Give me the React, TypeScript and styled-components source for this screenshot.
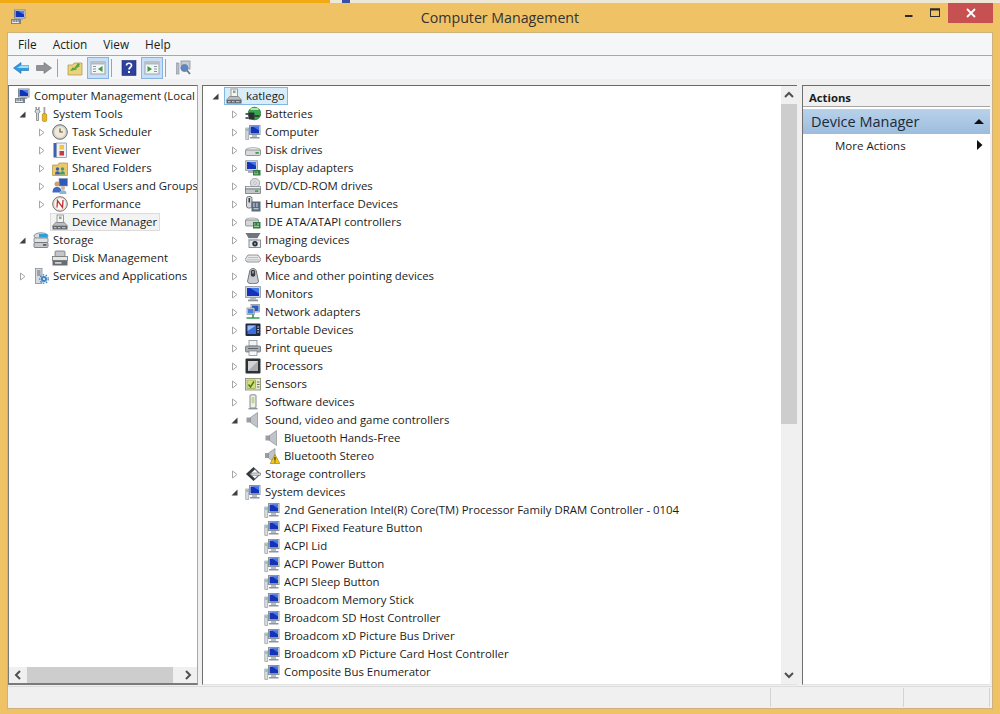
import React from "react";
import styled, { createGlobalStyle } from "styled-components";

const Global = createGlobalStyle`
  html, body { margin: 0; padding: 0; background: #efc265; }
  * { box-sizing: border-box; }
  #root { width: 1000px; height: 714px; overflow: hidden; }
`;

const FONT = `"Open Sans", "Noto Sans", "Liberation Sans", sans-serif`;

const Screen = styled.div`
  width: 1000px;
  height: 714px;
  display: flex;
  flex-direction: column;
  background: #efc265;
  font-family: ${FONT};
  font-size: 11.4px;
  color: #1c1c1c;
  overflow: hidden;
`;
const DesktopStrip = styled.div`
  height: 3px;
  flex: none;
  display: flex;
  background: #efe8d6;
`;
const StripAccent = styled.div`
  width: 330px;
  background: #f2aa14;
`;
const StripMark = styled.div`
  width: 8px;
  margin-left: 12px;
  background: #3a4fa8;
`;
const TitleBar = styled.div`
  height: 30px;
  flex: none;
  display: flex;
  align-items: flex-start;
  position: relative;
`;
const TitleIcon = styled.div`
  margin: 6px 0 0 10px;
  display: flex;
`;
const TitleText = styled.div`
  position: absolute;
  left: 0;
  right: 0;
  top: 5px;
  text-align: center;
  font-size: 14.2px;
  line-height: 20px;
  color: #333;
`;
const WindowButtons = styled.div`
  margin-left: auto;
  margin-right: 7px;
  display: flex;
`;
const CaptionButton = styled.div<{ $close?: boolean; $w: number }>`
  width: ${(p) => p.$w}px;
  height: 20px;
  display: flex;
  align-items: center;
  justify-content: center;
  background: ${(p) => (p.$close ? "#c75050" : "transparent")};
`;
const Client = styled.div`
  margin: 0 8px;
  height: 675px;
  flex: none;
  display: flex;
  flex-direction: column;
  background: #f0f0f0;
  box-shadow: 0 0 0 1px #cdb27c;
`;
const MenuBar = styled.div`
  height: 23px;
  flex: none;
  display: flex;
  align-items: center;
  gap: 16px;
  padding-left: 10px;
  background: #f5f6f7;
  border-bottom: 1px solid #a9a9a9;
`;
const MenuItem = styled.span`
  font-size: 11.8px;
  color: #1c1c1c;
`;
const Toolbar = styled.div`
  height: 23px;
  flex: none;
  display: flex;
  align-items: flex-end;
  gap: 1px;
  padding-left: 2px;
  background: #f5f6f7;
`;
const ToolButton = styled.div<{ $on?: boolean }>`
  width: 22px;
  height: 22px;
  display: flex;
  align-items: center;
  justify-content: center;
  background: ${(p) => (p.$on ? "#c6def6" : "transparent")};
  border: 1px solid ${(p) => (p.$on ? "#8ab2de" : "transparent")};
`;
const ToolSeparator = styled.div`
  width: 1px;
  height: 18px;
  margin: 0 5px 2px 1px;
  background: #9fa3a8;
`;
const Panes = styled.div`
  flex: none;
  height: 600px;
  margin-top: 6px;
  display: flex;
`;
const TreePane = styled.div`
  width: 190px;
  flex: none;
  display: flex;
  flex-direction: column;
  background: #fff;
  border: 1px solid #7a7a7a;
  border-top-color: #6a6a6a;
  border-bottom-width: 2px;
  border-right-color: #a8a8a8;
`;
const DevicePane = styled.div`
  width: 595px;
  flex: none;
  margin-left: 4px;
  display: flex;
  background: #fff;
  border-left: 1px solid #6f6f6f;
  border-top: 1px solid #6a6a6a;
  border-bottom: 1px solid #e2e2e2;
`;
const ActionPane = styled.div`
  width: 188px;
  flex: none;
  margin-left: 5px;
  display: flex;
  flex-direction: column;
  background: #fff;
  border-left: 1px solid #6f6f6f;
  border-top: 1px solid #6a6a6a;
  border-bottom: 1px solid #e2e2e2;
`;
const TreeBody = styled.div`
  flex: 1;
  min-width: 0;
  min-height: 0;
  overflow: hidden;
  padding-top: 1px;
`;
const Row = styled.div<{ $left: number }>`
  height: 18px;
  display: flex;
  align-items: center;
  white-space: nowrap;
  padding-left: ${(p) => p.$left}px;
`;
const Expander = styled.div`
  width: 14px;
  flex: none;
  height: 18px;
  display: flex;
  align-items: center;
  justify-content: center;
`;
const Entry = styled.div<{ $mark?: "focus" | "dim" }>`
  height: 18px;
  margin-left: 2px;
  padding-left: 1px;
  padding-right: 2px;
  display: flex;
  align-items: center;
  gap: 4px;
  background: ${(p) => (p.$mark === "focus" ? "#d9ecfa" : p.$mark === "dim" ? "#f3f3f3" : "transparent")};
  border: 1px solid ${(p) => (p.$mark === "focus" ? "#7fb8e0" : p.$mark === "dim" ? "#dcdcdc" : "transparent")};
`;
const Label = styled.span`
  font-size: 11.4px;
  line-height: 16px;
  color: #1c1c1c;
`;
const VBar = styled.div`
  width: 16px;
  flex: none;
  display: flex;
  flex-direction: column;
  background: #f0f0f0;
`;
const VArrow = styled.div`
  height: 18px;
  flex: none;
  display: flex;
  align-items: center;
  justify-content: center;
`;
const VThumb = styled.div`
  height: 320px;
  flex: none;
  background: #cdcdcd;
`;
const VTrack = styled.div`
  flex: 1;
`;
const HBar = styled.div`
  height: 16px;
  flex: none;
  display: flex;
  background: #f0f0f0;
`;
const HArrow = styled.div`
  width: 18px;
  flex: none;
  display: flex;
  align-items: center;
  justify-content: center;
`;
const HThumb = styled.div`
  width: 146px;
  flex: none;
  background: #cdcdcd;
`;
const HTrack = styled.div`
  flex: 1;
`;
const ActionsHead = styled.div`
  height: 21px;
  flex: none;
  display: flex;
  align-items: center;
  padding: 2px 0 0 6px;
  font-size: 11.3px;
  font-weight: 700;
  color: #1c1c1c;
  background: #f0f0f0;
  border-bottom: 1px solid #a4a4a4;
`;
const ActionGroup = styled.div`
  height: 25px;
  flex: none;
  margin-top: 2px;
  display: flex;
  align-items: center;
  justify-content: space-between;
  padding: 0 4px 0 8px;
  background: linear-gradient(#b9d2ea, #9dbcdd);
  font-size: 14.5px;
  color: #1a2a3a;
`;
const ActionRow = styled.div`
  height: 18px;
  flex: none;
  margin-top: 2px;
  display: flex;
  align-items: center;
  justify-content: space-between;
  padding: 0 7px 0 32px;
  font-size: 11.5px;
  color: #1c1c1c;
`;
const StatusBar = styled.div`
  height: 22px;
  flex: none;
  margin-top: 1px;
  display: flex;
  background: #f0f0f0;
  border-top: 1px solid #dcdcdc;
`;
const StatusCell = styled.div<{ $w: number }>`
  width: ${(p) => p.$w}px;
  flex: none;
  margin: 1px 0;
  border-right: 1px solid #d4d4d4;
`;

const Svg = styled.svg`
  width: 16px;
  height: 16px;
  flex: none;
  display: block;
`;

const Screen16 = () => (
  <>
    <rect x="4.5" y="1.5" width="10.5" height="9" fill="#e8ebf0" stroke="#8a94a0" />
    <rect x="5.5" y="2.5" width="8.500" height="7" fill="#1533b8" />
    <path d="M8 2.500h6v4z" fill="#3f78e8" />
    <rect x="7" y="11" width="5" height="2" fill="#b5bcc4" />
    <rect x="5" y="13" width="9.500" height="1.500" fill="#8d959e" />
  </>
);

const icons: Record<string, React.ReactNode> = {
  root: (
    <>
      <rect x="4.5" y="1" width="10.500" height="8" fill="#e4e8ee" stroke="#7e8894" />
      <rect x="5.5" y="2" width="8.500" height="6" fill="#1533b8" />
      <path d="M8 2h6v3.500z" fill="#4a86ec" />
      <rect x="7" y="9" width="6" height="2" fill="#a0a8b2" />
      <rect x="1" y="10" width="10" height="5" fill="#7b838c" />
      <path d="M2 12h1.500M4.500 12h1.500M7 12h1.500M2 13.500h7" stroke="#e6e8ea" />
    </>
  ),
  tools: (
    <>
      <path d="M3 1v3l-1 1v1l1.500 1v7.500h2V7l1.500-1v-1l-1-1V1l-.5 2.500h-2z" fill="#d4d6d8" stroke="#6c7278" strokeWidth=".7" />
      <rect x="10.500" y="1" width="1.800" height="7" fill="#a0a4a8" />
      <rect x="9.300" y="7.500" width="4.400" height="8" rx="1.500" fill="#eab71c" stroke="#a87c08" strokeWidth=".6" />
    </>
  ),
  clock: (
    <>
      <circle cx="8" cy="8" r="7.300" fill="#d2d4d4" stroke="#6d6d6d" />
      <circle cx="8" cy="8" r="5.200" fill="#f2ead6" />
      <path d="M8 4.500V8h3" stroke="#6a5a30" strokeWidth="1.200" fill="none" />
    </>
  ),
  event: (
    <>
      <rect x="1.500" y="1" width="3" height="14.500" fill="#3d62b0" />
      <rect x="4.500" y="1" width="10" height="14.500" fill="#eef0f4" stroke="#7d8aa0" strokeWidth=".7" />
      <rect x="7.500" y="3" width="4.500" height="4.500" fill="#f2c83a" />
      <rect x="7.500" y="9" width="4.500" height="4.500" fill="#c7384a" />
    </>
  ),
  shared: (
    <>
      <path d="M.5 5h5.500l1-2h8.500v12.500H.5z" fill="#e9c96c" stroke="#b0903c" strokeWidth=".7" />
      <circle cx="5.500" cy="9" r="1.700" fill="#3a5fae" />
      <path d="M3 14.500c0-2 1-3.200 2.500-3.200s2.500 1.200 2.500 3.200z" fill="#3a5fae" />
      <circle cx="10.500" cy="9" r="1.700" fill="#3f9a7a" />
      <path d="M8 14.500c0-2 1-3.200 2.500-3.200s2.500 1.200 2.500 3.200z" fill="#3f9a7a" />
    </>
  ),
  users: (
    <>
      <rect x="7" y=".5" width="8.500" height="7.500" fill="#3159b8" stroke="#8496b8" strokeWidth=".6" />
      <circle cx="5" cy="6" r="2.500" fill="#c9a074" />
      <path d="M.5 14.500c0-3.800 1.800-5.500 4.500-5.500s4.500 1.700 4.500 5.500z" fill="#3f6ac2" />
      <circle cx="11" cy="10" r="2.100" fill="#d8b48c" />
      <path d="M7.500 16c0-2.800 1.400-3.800 3.500-3.800s3.500 1 3.500 3.800z" fill="#8ab5d4" />
    </>
  ),
  perf: (
    <>
      <circle cx="8" cy="8" r="7.300" fill="#e6e4dc" stroke="#77706a" />
      <circle cx="8" cy="8" r="5.300" fill="#fbfaf6" />
      <path d="M5 11.500L5.500 4.500 10.500 11.500 11 4" fill="none" stroke="#bf2f35" strokeWidth="1.300" />
    </>
  ),
  devmgr: (
    <>
      <rect x="5" y="1" width="6.500" height="7.500" fill="#f3f3f0" stroke="#888" strokeWidth=".8" />
      <rect x="7" y="2.500" width="2.500" height="2.500" fill="#8fa48a" />
      <path d="M3.500 8.500h9L15.500 12H.5z" fill="#b9bcc0" stroke="#6e7378" strokeWidth=".6" />
      <rect x=".5" y="12" width="15" height="3.500" fill="#62676c" />
      <path d="M2 13.700h2.500M6 13.700h2.500M10 13.700h3.500" stroke="#d4d6d8" />
    </>
  ),
  storage: (
    <>
      <ellipse cx="8" cy="4" rx="7" ry="3.200" fill="#d9dcdf" stroke="#777d83" strokeWidth=".8" />
      <rect x="6" y="2" width="8.500" height="3.500" fill="#2ea0d8" />
      <rect x="1" y="6" width="14" height="4.500" rx="1" fill="#e0e2e4" stroke="#777d83" strokeWidth=".8" />
      <rect x="1" y="10.500" width="14" height="5" rx="1" fill="#c6c9cc" stroke="#666c72" strokeWidth=".8" />
      <rect x="10" y="12" width="3.500" height="1.800" fill="#5a6066" />
    </>
  ),
  diskmgmt: (
    <>
      <rect x="3" y="1" width="10" height="5.500" rx="1" fill="#c4c7ca" stroke="#6f7478" strokeWidth=".8" />
      <rect x=".5" y="6.500" width="15" height="4" fill="#e6e6e2" stroke="#6f7478" strokeWidth=".8" />
      <rect x=".5" y="10.500" width="15" height="5" fill="#686d72" />
      <rect x="3" y="12" width="6.500" height="1.800" fill="#ccd0d2" />
    </>
  ),
  services: (
    <>
      <rect x="2.500" y=".5" width="6.500" height="15" fill="#d6dade" stroke="#7a8088" strokeWidth=".7" />
      <path d="M4 3h3.500M4 5h3.500M4 7h3.500" stroke="#60666e" />
      <circle cx="11" cy="11" r="3" fill="#3f85bf" />
      <circle cx="11" cy="11" r="4.200" fill="none" stroke="#3f85bf" strokeWidth="1.300" strokeDasharray="1.500 1.500" />
      <circle cx="11" cy="11" r="1.100" fill="#e8f0f6" />
    </>
  ),
  battery: (
    <>
      <circle cx="9.500" cy="7.500" r="6.300" fill="#3aa64a" stroke="#1c6a2a" strokeWidth=".7" />
      <path d="M5.500 3h8" stroke="#d5f2d6" strokeWidth="1.600" />
      <rect x="3.500" y="6.500" width="6" height="7" rx="1" fill="#2c3034" />
      <path d="M.5 8h3M.5 12h3M9.500 10h5" stroke="#2c3034" strokeWidth="1.400" />
    </>
  ),
  computer: (
    <>
      <Screen16 />
      <rect x=".8" y="4" width="3" height="11.500" fill="#d2d6da" stroke="#88909a" strokeWidth=".6" />
      <path d="M1.300 6h2" stroke="#38a6c8" />
    </>
  ),
  disk: (
    <>
      <ellipse cx="8" cy="8" rx="7.500" ry="2.300" fill="#f0f1f2" stroke="#8a8f94" strokeWidth=".7" />
      <rect x=".5" y="8" width="15" height="5.500" rx="1" fill="#d8dadc" stroke="#6d7378" strokeWidth=".7" />
      <rect x="10.500" y="10" width="3.300" height="1.800" fill="#3f9f4a" />
    </>
  ),
  display: (
    <>
      <rect x=".8" y=".8" width="11.500" height="9.500" fill="#e2e6ea" stroke="#8a94a0" />
      <rect x="2" y="2" width="9" height="7" fill="#1533b8" />
      <path d="M4 2h7v4z" fill="#3f78e8" />
      <rect x="3" y="11" width="6" height="2" fill="#a9b0b7" />
      <rect x="8" y="10" width="7.500" height="5.500" fill="#2f7a3e" />
      <path d="M9 12h1.500M11.500 12h1.500M9 13.800h4.500" stroke="#b8e4bc" strokeWidth=".8" />
    </>
  ),
  dvd: (
    <>
      <circle cx="10" cy="5" r="4.700" fill="#d9dcdf" stroke="#8a8f94" strokeWidth=".7" />
      <circle cx="10" cy="5" r="1.300" fill="#fff" stroke="#8a8f94" strokeWidth=".5" />
      <rect x=".5" y="8.500" width="15" height="2.500" fill="#eceded" stroke="#767c82" strokeWidth=".7" />
      <rect x=".5" y="11" width="15" height="4.500" fill="#c2c5c8" stroke="#666c72" strokeWidth=".7" />
      <rect x="10" y="12.300" width="3.300" height="1.600" fill="#3f9f4a" />
    </>
  ),
  hid: (
    <>
      <rect x="1.500" y=".5" width="5.500" height="11.500" rx="2" fill="#d7d9dc" stroke="#555b62" strokeWidth=".8" />
      <rect x="3.500" y="2" width="1.600" height="4.500" fill="#3a4046" />
      <rect x="6.500" y="5.500" width="9" height="10" fill="#59697e" />
      <path d="M8 8h1.800M11 8h1.800M8 10h1.800M11 10h1.800M8.500 12.800h5" stroke="#e4e8ee" />
    </>
  ),
  ide: (
    <>
      <ellipse cx="7" cy="6" rx="6.500" ry="2" fill="#eeeff0" stroke="#8a8f94" strokeWidth=".7" />
      <rect x=".5" y="6" width="13" height="6" rx="1" fill="#d4d6d8" stroke="#6d7378" strokeWidth=".7" />
      <rect x="8" y="8" width="7.500" height="6.500" fill="#2f7a3e" />
      <path d="M9 10h1.500M12 10h2M9 12.300h5" stroke="#b8e4bc" />
    </>
  ),
  imaging: (
    <>
      <path d="M.5 1h15L12.500 6h-9z" fill="#6d7680" />
      <rect x="3" y="6" width="10" height="2" fill="#dfe3e6" />
      <rect x="4" y="8" width="11.500" height="7.500" fill="#e6e8ea" stroke="#70767c" strokeWidth=".8" />
      <circle cx="10" cy="11.700" r="2.700" fill="#2b3138" />
      <circle cx="10" cy="11.700" r="1" fill="#7fb0d8" />
    </>
  ),
  keyboard: (
    <>
      <path d="M3 5h10l3 4.500-2 2.500H2L0 9.500z" fill="#e8e8e8" stroke="#7a7e82" strokeWidth=".8" />
      <path d="M3.500 7.500h9M2.500 9.800h11" stroke="#8f9296" strokeDasharray="1 1" />
    </>
  ),
  mouse: (
    <>
      <path d="M4.500 4c0-2 1.500-3.500 3.500-3.500S11.500 2 11.500 4l2 9.500c0 1.500-2.500 2.300-5.500 2.300s-5.500-.8-5.500-2.300z" fill="#c9cdd1" stroke="#50565c" strokeWidth=".8" />
      <path d="M5.800 3.500c0-1 1.100-1.700 2.200-1.700s2.200.7 2.200 1.700v3.500c0 1-1.100 1.700-2.200 1.700S5.800 8 5.800 7z" fill="#34393f" />
      <rect x="7.400" y="3" width="1.200" height="2.500" fill="#c9cdd1" />
    </>
  ),
  monitor: (
    <>
      <rect x=".7" y=".7" width="14.600" height="10.600" fill="#e2e6ea" stroke="#8a94a0" />
      <rect x="2" y="2" width="12" height="8" fill="#1533b8" />
      <path d="M5 2h9v5.500z" fill="#3f78e8" />
      <rect x="5" y="12" width="6" height="1.500" fill="#b5bcc4" />
      <rect x="3" y="13.500" width="10" height="1.800" fill="#8d959e" />
    </>
  ),
  network: (
    <>
      <rect x="6" y=".5" width="8.500" height="7.500" fill="#d8dce2" stroke="#7e8894" strokeWidth=".7" />
      <rect x="7" y="1.500" width="6.500" height="5.500" fill="#2b56c8" />
      <rect x="2" y="4" width="7.500" height="6.500" fill="#d8dce2" stroke="#7e8894" strokeWidth=".7" />
      <rect x="3" y="5" width="5.500" height="4.500" fill="#4a7de0" />
      <path d="M8 10.500v3M1.500 14h13" stroke="#2f9e4c" strokeWidth="1.700" />
    </>
  ),
  portable: (
    <>
      <rect x=".5" y="1.500" width="15" height="12.500" rx="1" fill="#1f2b46" />
      <rect x="2.500" y="3.500" width="8.500" height="8.500" fill="#3d6fdc" />
      <path d="M2.500 3.500H11L2.500 9z" fill="#9abcf2" />
      <path d="M12.300 5h1.800M12.300 7.500h1.800M12.300 10h1.800" stroke="#d5dbe6" />
    </>
  ),
  printer: (
    <>
      <rect x="4" y=".5" width="8" height="5.500" fill="#f2f3f4" stroke="#7a8086" strokeWidth=".7" />
      <rect x=".5" y="6" width="15" height="6" rx="1" fill="#a9aeb4" stroke="#5e646a" strokeWidth=".7" />
      <rect x="3" y="8" width="10" height="1" fill="#5e646a" />
      <rect x="4" y="11" width="8" height="4.500" fill="#f7f7f8" stroke="#7a8086" strokeWidth=".7" />
    </>
  ),
  cpu: (
    <>
      <rect x=".5" y=".5" width="15" height="15" rx="1" fill="#2d3136" />
      <rect x="3" y="3" width="10" height="10" fill="#a9abae" />
      <path d="M3 3h10L3 13z" fill="#d2d3d4" />
      <path d="M.5 5v6M15.500 5v6" stroke="#c7a03a" strokeDasharray="1 1" />
    </>
  ),
  sensor: (
    <>
      <rect x=".5" y="2.500" width="15" height="11.500" fill="#e8e8d0" stroke="#7f8866" strokeWidth=".8" />
      <rect x="2" y="4" width="8.500" height="8.500" fill="#d6de72" stroke="#8c9a44" strokeWidth=".6" />
      <path d="M3.500 8.500l2 2.500 3.500-5.500" fill="none" stroke="#3e7c30" strokeWidth="1.500" />
      <path d="M12 6h2.500M12 8.500h2.500M12 11h2.500" stroke="#6d7460" />
    </>
  ),
  software: (
    <>
      <rect x="5" y=".8" width="6" height="13.200" rx="1" fill="#eef0ea" stroke="#777c80" strokeWidth=".9" />
      <rect x="6.500" y="2.800" width="3" height="6.500" fill="#c6d49a" />
      <rect x="3.500" y="14" width="9" height="1.400" fill="#8e9398" />
    </>
  ),
  speaker: (
    <>
      <rect x="1.500" y="5.500" width="4.500" height="5" fill="#9a9ea2" />
      <path d="M5.500 5.500L12.500.5v15L5.500 10.500z" fill="#c0c3c7" stroke="#7e8287" strokeWidth=".6" />
    </>
  ),
  speakerwarn: (
    <>
      <rect x="1" y="5" width="4.500" height="5" fill="#9a9ea2" />
      <path d="M4.500 5L11 .5v14L4.500 10z" fill="#c0c3c7" stroke="#7e8287" strokeWidth=".6" />
      <path d="M11 6.500L15.800 15.500H6.200z" fill="#f3c81e" stroke="#8f7408" strokeWidth=".6" />
      <path d="M11 9v3.500M11 13.500v1" stroke="#222" strokeWidth="1.100" />
    </>
  ),
  controller: (
    <>
      <path d="M9.500 2L3 8l6.500 6" fill="none" stroke="#34393f" strokeWidth="2.800" />
      <path d="M10 3l5 5-5 5" fill="none" stroke="#6b7076" strokeWidth="1.200" />
      <rect x="6" y="7" width="9.500" height="2.200" fill="#d8dadc" stroke="#555b62" strokeWidth=".5" />
    </>
  ),
  system: (
    <>
      <Screen16 />
      <rect x=".8" y="5" width="3" height="10.500" fill="#d9dde0" stroke="#88909a" strokeWidth=".6" />
      <path d="M1.300 7h2" stroke="#3aa6a0" />
    </>
  ),
};

const Icon = ({ name }: { name: string }) => <Svg viewBox="0 0 16 16">{icons[name]}</Svg>;

const Twist = ({ open }: { open?: boolean }) => (
  <svg width="9" height="9" viewBox="0 0 9 9" style={{ display: "block" }}>
    {open ? (
      <path d="M7.500 1.500V7.500H1.500z" fill="#3f3f3f" />
    ) : (
      <path d="M2.500 1L7 4.500 2.500 8z" fill="#fff" stroke="#a6a6a6" />
    )}
  </svg>
);

type Node = {
  level: number;
  label: string;
  icon: string;
  state?: "open" | "closed" | "none";
  mark?: "focus" | "dim";
};

const TreeRow = ({ node, base, noExpander }: { node: Node; base: number; noExpander?: boolean }) => (
  <Row $left={base + node.level * 19}>
    {!noExpander && (
      <Expander>{node.state && node.state !== "none" ? <Twist open={node.state === "open"} /> : null}</Expander>
    )}
    <Entry $mark={node.mark}>
      <Icon name={node.icon} />
      <Label>{node.label}</Label>
    </Entry>
  </Row>
);

const leftNodes: Node[] = [
  { level: 0, label: "System Tools", icon: "tools", state: "open" },
  { level: 1, label: "Task Scheduler", icon: "clock", state: "closed" },
  { level: 1, label: "Event Viewer", icon: "event", state: "closed" },
  { level: 1, label: "Shared Folders", icon: "shared", state: "closed" },
  { level: 1, label: "Local Users and Groups", icon: "users", state: "closed" },
  { level: 1, label: "Performance", icon: "perf", state: "closed" },
  { level: 1, label: "Device Manager", icon: "devmgr", state: "none", mark: "dim" },
  { level: 0, label: "Storage", icon: "storage", state: "open" },
  { level: 1, label: "Disk Management", icon: "diskmgmt", state: "none" },
  { level: 0, label: "Services and Applications", icon: "services", state: "closed" },
];

const cat = (label: string, icon: string, state: Node["state"] = "closed"): Node => ({ level: 1, label, icon, state });
const dev = (label: string, icon = "system"): Node => ({ level: 2, label, icon, state: "none" });

const deviceNodes: Node[] = [
  { level: 0, label: "katlego", icon: "devmgr", state: "open", mark: "focus" },
  cat("Batteries", "battery"),
  cat("Computer", "computer"),
  cat("Disk drives", "disk"),
  cat("Display adapters", "display"),
  cat("DVD/CD-ROM drives", "dvd"),
  cat("Human Interface Devices", "hid"),
  cat("IDE ATA/ATAPI controllers", "ide"),
  cat("Imaging devices", "imaging"),
  cat("Keyboards", "keyboard"),
  cat("Mice and other pointing devices", "mouse"),
  cat("Monitors", "monitor"),
  cat("Network adapters", "network"),
  cat("Portable Devices", "portable"),
  cat("Print queues", "printer"),
  cat("Processors", "cpu"),
  cat("Sensors", "sensor"),
  cat("Software devices", "software"),
  cat("Sound, video and game controllers", "speaker", "open"),
  dev("Bluetooth Hands-Free", "speaker"),
  dev("Bluetooth Stereo", "speakerwarn"),
  cat("Storage controllers", "controller"),
  cat("System devices", "system", "open"),
  dev("2nd Generation Intel(R) Core(TM) Processor Family DRAM Controller - 0104"),
  dev("ACPI Fixed Feature Button"),
  dev("ACPI Lid"),
  dev("ACPI Power Button"),
  dev("ACPI Sleep Button"),
  dev("Broadcom Memory Stick"),
  dev("Broadcom SD Host Controller"),
  dev("Broadcom xD Picture Bus Driver"),
  dev("Broadcom xD Picture Card Host Controller"),
  dev("Composite Bus Enumerator"),
];

const Chevron = ({ d }: { d: string }) => (
  <svg width="10" height="10" viewBox="0 0 10 10" style={{ display: "block" }}>
    <path d={d} fill="none" stroke="#505050" strokeWidth="2" />
  </svg>
);

const ToolIcon = ({ children }: { children: React.ReactNode }) => <Svg viewBox="0 0 16 16">{children}</Svg>;

export default function App() {
  return (
    <Screen>
      <Global />
      <DesktopStrip>
        <StripAccent />
        <StripMark />
      </DesktopStrip>
      <TitleBar>
        <TitleIcon>
          <Icon name="root" />
        </TitleIcon>
        <TitleText>Computer Management</TitleText>
        <WindowButtons>
          <CaptionButton $w={26}>
            <svg width="10" height="10" viewBox="0 0 10 10">
              <rect x="1" y="7" width="7.500" height="2" fill="#2b2b2b" />
            </svg>
          </CaptionButton>
          <CaptionButton $w={26}>
            <svg width="10" height="10" viewBox="0 0 10 10">
              <rect x=".5" y="1" width="9" height="7.500" fill="none" stroke="#2b2b2b" />
              <rect x="0" y=".5" width="10" height="2" fill="#2b2b2b" />
            </svg>
          </CaptionButton>
          <CaptionButton $close $w={45}>
            <svg width="10" height="10" viewBox="0 0 10 10">
              <path d="M1 1l8 8M9 1l-8 8" stroke="#fff" strokeWidth="1.800" />
            </svg>
          </CaptionButton>
        </WindowButtons>
      </TitleBar>
      <Client>
        <MenuBar>
          <MenuItem>File</MenuItem>
          <MenuItem>Action</MenuItem>
          <MenuItem>View</MenuItem>
          <MenuItem>Help</MenuItem>
        </MenuBar>
        <Toolbar>
          <ToolButton>
            <ToolIcon>
              <path d="M.5 8L8 2.500V5.500h7.500v5H8v3z" fill="#2f9be0" stroke="#1c6fb4" strokeWidth=".6" />
              <path d="M8 5.500h7.500V8H4z" fill="#a6dcf6" />
            </ToolIcon>
          </ToolButton>
          <ToolButton>
            <ToolIcon>
              <path d="M15.500 8L8 2.500V5.500H.5v5H8v3z" fill="#8f9296" stroke="#6d7074" strokeWidth=".6" />
            </ToolIcon>
          </ToolButton>
          <ToolSeparator />
          <ToolButton>
            <ToolIcon>
              <path d="M1 5h5l1-2h8v12H1z" fill="#ead27e" stroke="#b39440" strokeWidth=".7" />
              <path d="M3 11l3-4 1 1.500L11 3l2 1-1 1.500 1 .5-4 2.500 1 1z" fill="#54a63c" />
            </ToolIcon>
          </ToolButton>
          <ToolButton $on>
            <ToolIcon>
              <rect x="1" y="2" width="14" height="12" fill="#f4f6f8" stroke="#9ca4ac" />
              <rect x="1.500" y="2.500" width="13" height="2" fill="#b0b8c2" />
              <path d="M3 6.500h3M3 9h3M3 11.500h3" stroke="#8a9299" />
              <path d="M12.500 6v6L8 9z" fill="#3d9a3d" />
            </ToolIcon>
          </ToolButton>
          <ToolSeparator />
          <ToolButton>
            <ToolIcon>
              <rect x="1" y="0.500" width="14" height="15" fill="#2f3f9c" stroke="#1f2c78" strokeWidth=".6" />
              <path d="M5.500 5.500c0-3 5-3 5 0 0 2-2.500 2-2.500 4" fill="none" stroke="#fff" strokeWidth="1.700" />
              <rect x="7" y="11" width="2" height="2" fill="#fff" />
            </ToolIcon>
          </ToolButton>
          <ToolButton $on>
            <ToolIcon>
              <rect x="1" y="2" width="14" height="12" fill="#f4f6f8" stroke="#9ca4ac" />
              <rect x="1.500" y="2.500" width="13" height="2" fill="#b0b8c2" />
              <path d="M10 6.500h3M10 9h3M10 11.500h3" stroke="#8a9299" />
              <path d="M3.500 6v6L8 9z" fill="#3d9a3d" />
            </ToolIcon>
          </ToolButton>
          <ToolSeparator />
          <ToolButton>
            <ToolIcon>
              <rect x="6" y="1" width="9" height="8" fill="#c6ccd4" stroke="#7e8894" strokeWidth=".7" />
              <rect x="1.500" y="3" width="2.500" height="11" fill="#b8bec6" stroke="#868e98" strokeWidth=".6" />
              <circle cx="9.500" cy="8" r="3.500" fill="#5a86cc" stroke="#6e7e94" strokeWidth=".9" />
              <path d="M12 10.500l3 3.500" stroke="#6a7480" strokeWidth="1.800" />
            </ToolIcon>
          </ToolButton>
        </Toolbar>
        <Panes>
          <TreePane>
            <TreeBody>
              <TreeRow
                node={{ level: 0, label: "Computer Management (Local", icon: "root" }}
                base={1}
                noExpander
              />
              {leftNodes.map((n) => (
                <TreeRow key={n.label} node={n} base={6} />
              ))}
            </TreeBody>
            <HBar>
              <HArrow>
                <Chevron d="M7 1L3 5l4 4" />
              </HArrow>
              <HThumb />
              <HTrack />
              <HArrow>
                <Chevron d="M3 1l4 4-4 4" />
              </HArrow>
            </HBar>
          </TreePane>
          <DevicePane>
            <TreeBody>
              {deviceNodes.map((n) => (
                <TreeRow key={n.label} node={n} base={5} />
              ))}
            </TreeBody>
            <VBar>
              <VArrow>
                <Chevron d="M1 7l4-4 4 4" />
              </VArrow>
              <VThumb />
              <VTrack />
              <VArrow>
                <Chevron d="M1 3l4 4 4-4" />
              </VArrow>
            </VBar>
          </DevicePane>
          <ActionPane>
            <ActionsHead>Actions</ActionsHead>
            <ActionGroup>
              Device Manager
              <svg width="14" height="8" viewBox="0 0 14 8">
                <path d="M7 1l5 5H2z" fill="#111" />
              </svg>
            </ActionGroup>
            <ActionRow>
              More Actions
              <svg width="6" height="10" viewBox="0 0 6 10">
                <path d="M0 0l5.500 5L0 10z" fill="#111" />
              </svg>
            </ActionRow>
          </ActionPane>
        </Panes>
        <StatusBar>
          <StatusCell $w={763} />
          <StatusCell $w={133} />
          <StatusCell $w={86} />
        </StatusBar>
      </Client>
    </Screen>
  );
}
